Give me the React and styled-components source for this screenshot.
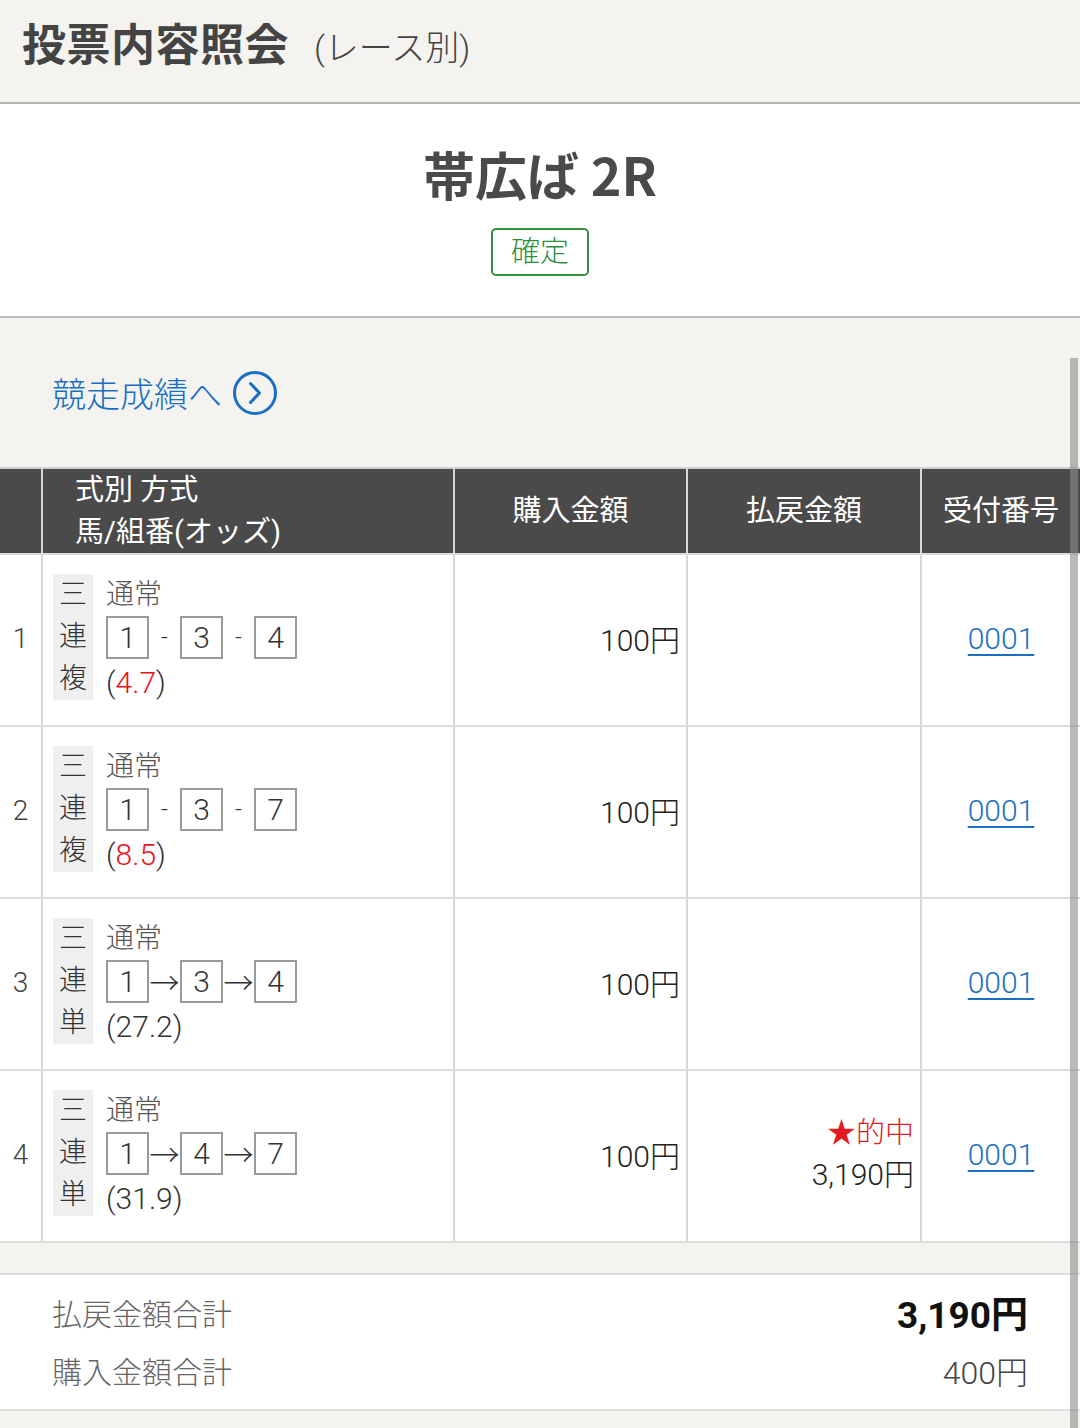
import React from "react";
import styled, { createGlobalStyle } from "styled-components";

const GlobalStyle = createGlobalStyle`
  html, body {
    margin: 0;
    padding: 0;
    background: #f4f3ef;
    font-family: Roboto, "Noto Sans CJK JP", sans-serif;
    color: #333;
  }
`;

const Page = styled.div`
  position: relative;
  width: 1080px;
  min-height: 1428px;
  background: #f4f3ef;
  overflow: hidden;
`;

const TopBar = styled.header`
  height: 104px;
  display: flex;
  align-items: center;
  padding: 0 22px 18px;
  box-sizing: border-box;
  border-bottom: 2px solid #b4b4b4;
`;

const PageTitle = styled.h1`
  margin: 0;
  font-family: "Noto Sans CJK JP", sans-serif;
  font-size: 44px;
  font-weight: 700;
  color: #444;
  letter-spacing: 0.5px;
`;

const SubTitle = styled.span`
  margin-left: 25px;
  font-size: 34px;
  font-weight: 300;
  color: #444;
  position: relative;
  top: 3px;
`;

const RaceBox = styled.section`
  background: #fff;
  height: 214px;
  display: flex;
  flex-direction: column;
  align-items: center;
  padding-top: 34px;
  box-sizing: border-box;
  border-bottom: 2px solid #bcbcbc;
`;

const RaceName = styled.div`
  font-family: "Noto Sans CJK JP", sans-serif;
  font-size: 52px;
  font-weight: 700;
  color: #4a4a4a;
  line-height: 72px;
`;

const StatusBadge = styled.div`
  margin-top: 18px;
  width: 98px;
  height: 48px;
  box-sizing: border-box;
  border: 2px solid #2f8f3d;
  border-radius: 5px;
  color: #2f8f3d;
  font-size: 29px;
  font-weight: 300;
  display: flex;
  align-items: center;
  justify-content: center;
  line-height: 1;
`;

const LinkArea = styled.div`
  height: 149px;
  display: flex;
  align-items: center;
  padding: 0 0 0 52px;
  box-sizing: border-box;
`;

const ResultLink = styled.a`
  display: flex;
  align-items: center;
  gap: 10px;
  color: #1a6fc4;
  font-size: 34px;
  font-weight: 300;
  text-decoration: none;
`;

const Table = styled.div`
  border-top: 2px solid #cfcfcf;
`;

const Row = styled.div`
  display: grid;
  grid-template-columns: 41px 412px 233px 234px 1fr;
  height: ${(p) => (p.$head ? "84px" : "170px")};
  background: ${(p) => (p.$head ? "#4a4a4a" : "#fff")};
  color: ${(p) => (p.$head ? "#fff" : "#333")};
  border-bottom: 2px solid #dcdcdc;
  box-sizing: content-box;
`;

const Cell = styled.div`
  display: flex;
  align-items: center;
  justify-content: ${(p) => p.$justify || "flex-start"};
  border-left: ${(p) => (p.$first ? "none" : "2px solid #d8d8d8")};
  padding: ${(p) => p.$pad || "0"};
  box-sizing: border-box;
  font-size: 30px;
  font-weight: 300;
  min-width: 0;
`;

const HeadLabel = styled.div`
  font-size: 29px;
  line-height: 42px;
  font-weight: 400;
`;

const IndexNum = styled.span`
  font-size: 28px;
  color: #444;
`;

const BetType = styled.div`
  display: flex;
  flex-direction: column;
  align-items: center;
  width: 40px;
  background: #efefef;
  font-size: 28px;
  line-height: 42px;
  color: #333;
`;

const BetBody = styled.div`
  display: flex;
  flex-direction: column;
  margin-left: 13px;
`;

const BetLine = styled.div`
  display: flex;
  align-items: center;
  height: 45px;
  font-size: ${(p) => p.$size || "30px"};
  color: ${(p) => (p.$muted ? "#555" : "#333")};
`;

const NumBox = styled.span`
  display: inline-flex;
  align-items: center;
  justify-content: center;
  width: 43px;
  height: 43px;
  box-sizing: border-box;
  border: 2px solid #9a9a9a;
  font-size: 30px;
  color: #333;
`;

const Joint = styled.span`
  display: inline-block;
  width: 31px;
  text-align: center;
  font-size: ${(p) => (p.$arrow ? "30px" : "24px")};
  color: #333;
`;

const Odds = styled.span`
  color: ${(p) => (p.$red ? "#e8131c" : "inherit")};
`;

const Amount = styled.span`
  font-size: 30px;
  color: #222;
`;

const PayoutStack = styled.div`
  display: flex;
  flex-direction: column;
  align-items: flex-end;
  line-height: 42px;
`;

const HitMark = styled.span`
  color: #e21a23;
  font-size: 29px;
`;

const Receipt = styled.a`
  color: #1a6fc4;
  font-size: 30px;
  text-decoration: underline;
  text-underline-offset: 5px;
  text-decoration-thickness: 2px;
`;

const Summary = styled.section`
  margin-top: 30px;
  background: #fff;
  border-top: 2px solid #dedede;
  border-bottom: 2px solid #dedede;
  padding: 8px 52px 10px 52px;
`;

const SumRow = styled.div`
  display: flex;
  justify-content: space-between;
  align-items: center;
  height: 58px;
`;

const SumLabel = styled.span`
  font-size: 30px;
  font-weight: 300;
  color: #666;
`;

const SumValue = styled.span`
  font-size: ${(p) => (p.$bold ? "37px" : "32px")};
  font-weight: ${(p) => (p.$bold ? 700 : 300)};
  color: ${(p) => (p.$bold ? "#111" : "#444")};
`;

const ScrollThumb = styled.div`
  position: absolute;
  left: 1070px;
  top: 358px;
  width: 8px;
  bottom: 0;
  background: rgba(140, 140, 140, 0.6);
`;

function CircleArrow() {
  return (
    <svg width="46" height="46" viewBox="0 0 46 46" fill="none">
      <circle cx="23" cy="23" r="20.5" stroke="#1a6fc4" strokeWidth="3" />
      <path d="M18.5 13.5 L27.5 23 L18.5 32.5" stroke="#1a6fc4" strokeWidth="3" strokeLinecap="round" strokeLinejoin="round" />
    </svg>
  );
}

const bets = [
  { type: ["三", "連", "複"], nums: [1, 3, 4], arrow: false, odds: "4.7", red: true },
  { type: ["三", "連", "複"], nums: [1, 3, 7], arrow: false, odds: "8.5", red: true },
  { type: ["三", "連", "単"], nums: [1, 3, 4], arrow: true, odds: "27.2", red: false },
  { type: ["三", "連", "単"], nums: [1, 4, 7], arrow: true, odds: "31.9", red: false, hit: "3,190円" },
];

function BetRow({ index, bet }) {
  return (
    <Row>
      <Cell $first $justify="center" $pad="0 0 4px 0">
        <IndexNum>{index}</IndexNum>
      </Cell>
      <Cell $pad="0 0 6px 10px">
        <BetType>
          {bet.type.map((c, i) => (
            <span key={i}>{c}</span>
          ))}
        </BetType>
        <BetBody>
          <BetLine $size="28px" $muted>通常</BetLine>
          <BetLine>
            {bet.nums.map((n, i) => (
              <React.Fragment key={i}>
                {i > 0 && <Joint $arrow={bet.arrow}>{bet.arrow ? "→" : "-"}</Joint>}
                <NumBox>{n}</NumBox>
              </React.Fragment>
            ))}
          </BetLine>
          <BetLine>
            (<Odds $red={bet.red}>{bet.odds}</Odds>)
          </BetLine>
        </BetBody>
      </Cell>
      <Cell $justify="flex-end" $pad="0 6px 4px 0">
        <Amount>100円</Amount>
      </Cell>
      <Cell $justify="flex-end" $pad="0 6px 4px 0">
        {bet.hit && (
          <PayoutStack>
            <HitMark>★的中</HitMark>
            <Amount>{bet.hit}</Amount>
          </PayoutStack>
        )}
      </Cell>
      <Cell $justify="center" $pad="0 0 4px 0">
        <Receipt href="#">0001</Receipt>
      </Cell>
    </Row>
  );
}

export default function App() {
  return (
    <Page>
      <GlobalStyle />
      <TopBar>
        <PageTitle>投票内容照会</PageTitle>
        <SubTitle>(レース別)</SubTitle>
      </TopBar>
      <RaceBox>
        <RaceName>帯広ば 2R</RaceName>
        <StatusBadge>確定</StatusBadge>
      </RaceBox>
      <LinkArea>
        <ResultLink href="#">
          競走成績へ
          <CircleArrow />
        </ResultLink>
      </LinkArea>
      <Table>
        <Row $head>
          <Cell $first />
          <Cell $pad="0 0 0 32px">
            <HeadLabel>
              式別 方式
              <br />
              馬/組番(オッズ)
            </HeadLabel>
          </Cell>
          <Cell $justify="center">
            <HeadLabel>購入金額</HeadLabel>
          </Cell>
          <Cell $justify="center">
            <HeadLabel>払戻金額</HeadLabel>
          </Cell>
          <Cell $justify="center">
            <HeadLabel>受付番号</HeadLabel>
          </Cell>
        </Row>
        {bets.map((b, i) => (
          <BetRow key={i} index={i + 1} bet={b} />
        ))}
      </Table>
      <Summary>
        <SumRow>
          <SumLabel>払戻金額合計</SumLabel>
          <SumValue $bold>3,190円</SumValue>
        </SumRow>
        <SumRow>
          <SumLabel>購入金額合計</SumLabel>
          <SumValue>400円</SumValue>
        </SumRow>
      </Summary>
      <ScrollThumb />
    </Page>
  );
}
